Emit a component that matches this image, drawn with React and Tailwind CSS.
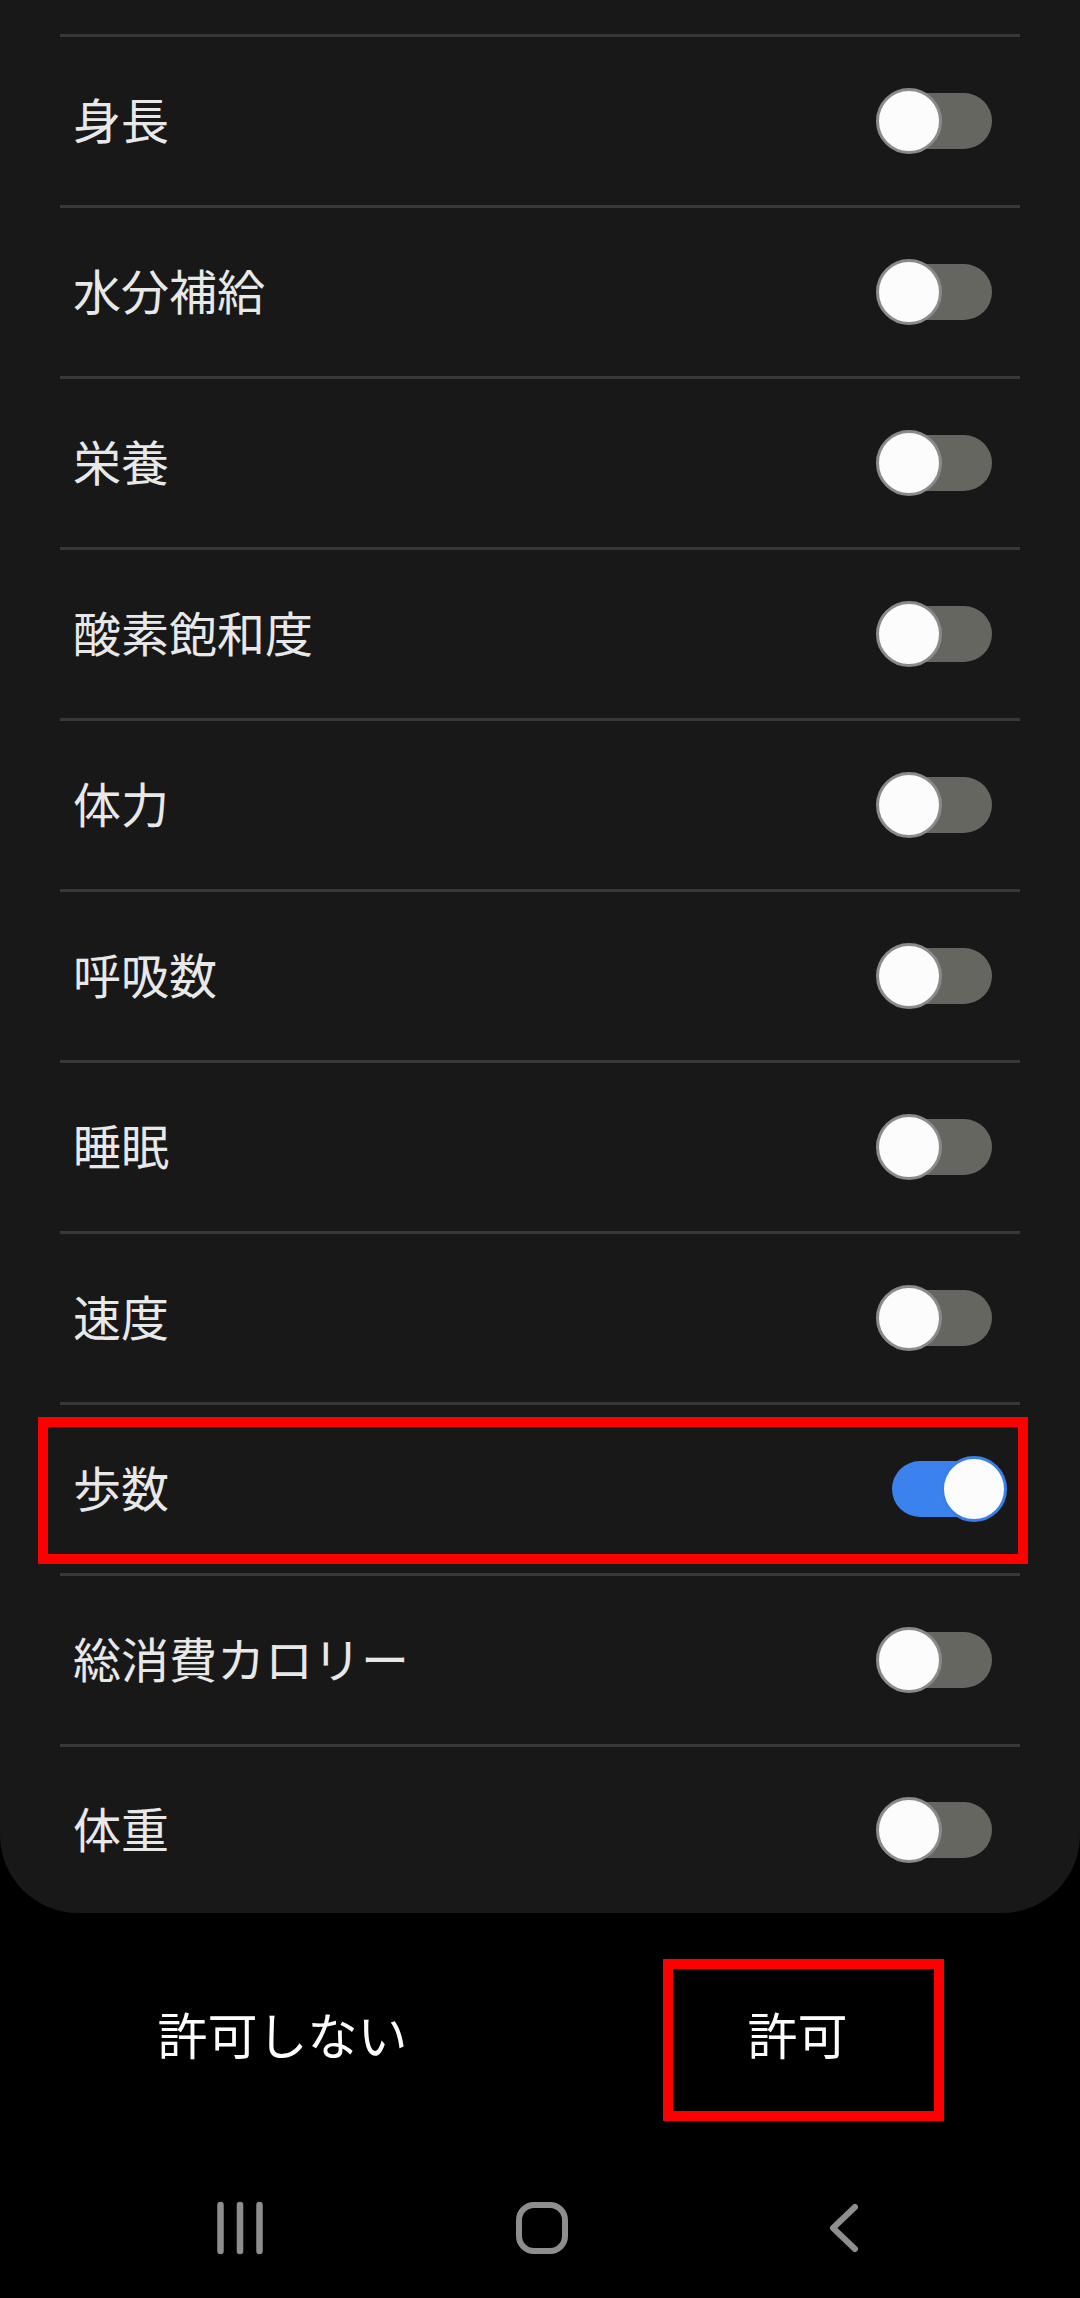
import React from "react";

const items = [
  { label: "身長", on: false },
  { label: "水分補給", on: false },
  { label: "栄養", on: false },
  { label: "酸素飽和度", on: false },
  { label: "体力", on: false },
  { label: "呼吸数", on: false },
  { label: "睡眠", on: false },
  { label: "速度", on: false },
  { label: "歩数", on: true, highlight: true },
  { label: "総消費カロリー", on: false },
  { label: "体重", on: false },
];

function Toggle({ on }) {
  return (
    <div className="relative w-[131px] h-[66px] shrink-0">
      <div
        className={
          "absolute left-[16px] right-[15px] top-[5px] h-[56px] rounded-full " +
          (on ? "bg-[#3c82ef]" : "bg-[#65665f]")
        }
      />
      {on ? (
        <div className="absolute top-0 right-0 w-[66px] h-[66px] rounded-full bg-[#fcfcfc] border-[3px] border-[#3a7fe8]" />
      ) : (
        <div className="absolute top-0 left-0 w-[66px] h-[66px] rounded-full bg-[#fcfcfc] border-[3px] border-[#8a8a8a]" />
      )}
    </div>
  );
}

function Row({ item, last }) {
  return (
    <div
      className={
        "relative flex items-center justify-between border-t-[3px] border-[#383838] pl-[13px] pr-[13px] " +
        (last ? "h-[169px]" : "h-[171px]")
      }
    >
      <span className="mb-[6px] text-[48px] leading-none text-[#e8e8e8] font-normal">{item.label}</span>
      <Toggle on={item.on} />
      {item.highlight && (
        <div className="absolute left-[-22px] right-[-8px] top-[12px] bottom-[9px] border-[10px] border-[#ff0000] pointer-events-none" />
      )}
    </div>
  );
}

export default function App() {
  return (
    <div
      className="w-[1080px] h-[2298px] bg-black overflow-hidden flex flex-col"
      style={{ fontFamily: '"Noto Sans CJK JP", "Noto Sans", sans-serif' }}
    >
      <div className="bg-[#181818] rounded-b-[78px] px-[60px] pt-[34px] shrink-0">
        {items.map((it, i) => (
          <Row key={it.label} item={it} last={i === items.length - 1} />
        ))}
      </div>

      <div className="h-[254px] shrink-0 grid grid-cols-2 px-[25px] items-center">
        <div className="flex justify-center mb-[14px]">
          <span className="text-[50px] leading-none text-white">許可しない</span>
        </div>
        <div className="flex justify-center">
          <div className="ml-[11px] w-[281px] h-[162px] border-[10px] border-[#ff0000] flex items-center justify-center pr-[11px]">
            <span className="mb-[14px] text-[50px] leading-none text-white">許可</span>
          </div>
        </div>
      </div>

      <div className="h-[122px] shrink-0 grid grid-cols-3 pl-[89px] pr-[85px] items-center">
        <div className="flex justify-center">
          <svg width="60" height="60" viewBox="0 0 60 60" fill="none" stroke="#8e8e8e" strokeWidth="6.5" strokeLinecap="round">
            <line x1="10.5" y1="7" x2="10.5" y2="53" />
            <line x1="30" y1="7" x2="30" y2="53" />
            <line x1="49.5" y1="7" x2="49.5" y2="53" />
          </svg>
        </div>
        <div className="flex justify-center">
          <svg width="60" height="60" viewBox="0 0 60 60" fill="none" stroke="#8e8e8e" strokeWidth="6">
            <rect x="7" y="7" width="46" height="46" rx="15" />
          </svg>
        </div>
        <div className="flex justify-center">
          <svg width="60" height="60" viewBox="0 0 60 60" fill="none" stroke="#8e8e8e" strokeWidth="6" strokeLinecap="round" strokeLinejoin="round">
            <polyline points="41,9 19,30 41,51" />
          </svg>
        </div>
      </div>
    </div>
  );
}
